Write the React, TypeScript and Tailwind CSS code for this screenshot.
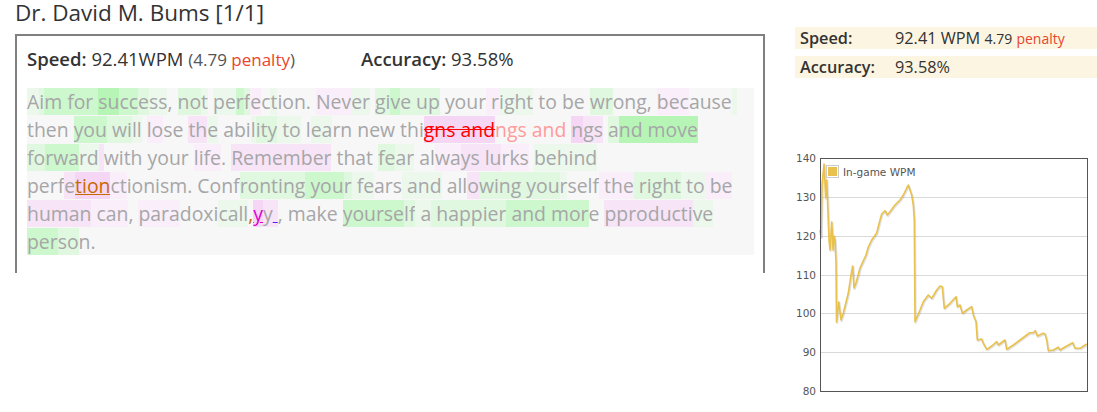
import React from "react";

type Seg = [string, string?];

const G3 = "bg-[#b6f5b6]";
const G2 = "bg-[#cdf7cd]";
const G1 = "bg-[#dff8df]";
const G0 = "bg-[#ecf8ec]";
const P2 = "bg-[#f5d6f5]";
const P1 = "bg-[#f7e4f7]";
const P0 = "bg-[#f9eef9]";

const ERR_STRIKE = "text-[#ff0000] line-through bg-[#f5d6f5]";
const ERR_GHOST = "text-[#ff9a9a]";
const ERR_ORANGE = "text-[#c86a00] underline bg-[#f5d6f5]";
const ERR_ORANGE2 = "text-[#c86a00] underline";
const ERR_MAG = "text-[#e000d0] underline bg-[#f5d6f5]";
const ERR_BLUE = "underline decoration-[#5a1aff] bg-[#f7e4f7]";

const lines: Seg[][] = [
  [
    ["A", G0], ["i", G1], ["m", G2], [" ", G2], ["for", G2], [" ", G2], ["su", G3], ["cc", G2], ["e", G1], ["ss", G0], [", "],
    ["no", G1], ["t", G0], [" "], ["pe", G0], ["r", G2], ["f", G1], ["e", P0], ["c"], ["t", G0], ["ion. "],
    ["Nev", P0], ["er", G0], [" "], ["gi", G1], ["v", G2], ["e", G1], [" up", G1], [" your"], [" r", P0], ["ight", G0],
    [" to be "], ["wr", G1], ["ong, "], ["bec", P0], ["ause"], [" ", G0],
  ],
  [
    ["then "], ["you", G2], [" wi", G1], ["ll", G0], [" "], ["lo", P0], ["se "], ["th", P1], ["e", G0], [" abi"], ["l", G0],
    ["ity", G1], [" to", G0], [" l"], ["ea", G0], ["rn new thi"], ["gns and", ERR_STRIKE], ["ngs and ", ERR_GHOST],
    ["n", P2], ["gs", P1], [" "], ["a", G1], ["nd move", G3],
  ],
  [
    ["fo", G1], ["rwa", G2], ["rd", G0], [" ", P1], ["with your "], ["life", P0], [". "], ["Remember", P1], [" that "],
    ["fe", G1], ["ar", G0], [" al"], ["wa", P0], ["ys ", P1], ["lu", P1], ["rks", P0], [" "], ["behind", G0],
  ],
  [
    ["perf"], ["e", P1], ["tion", ERR_ORANGE], ["ct", P0], ["ionism. "], ["Conf"], ["ronting", G1], [" you", G2], ["r", G1],
    [" ", G0], ["fe", G0], ["ars"], [" and", G0], [" all"], ["o", P1], ["wing", G1], [" you", G1], ["r", G0], ["self"],
    [" the", P0], [" right", G1], [" to", G0], [" be", P0],
  ],
  [
    ["human", P1], [" can", P0], [", "], ["para", P0], ["doxi"], ["call", G0], [",", ERR_ORANGE2], ["y", ERR_MAG], ["y", P1],
    [" ", ERR_BLUE], [", make "], ["yourse", G2], ["lf", G1], [" a", G0], [" happier", G1], [" and", G2], [" mor", G2],
    ["e "], ["pproducti", P1], ["ve", G0],
  ],
  [["per", G2], ["so", G1], ["n."]],
];

const pts: [number, number][] = [
  [820, 230], [821, 237], [822, 185], [824, 164], [825.7, 198], [826.7, 180], [827.5, 200], [829, 240], [830, 250],
  [831.7, 222], [832.5, 236], [833, 250], [834, 236], [835, 240], [836, 262], [836.5, 322], [838.7, 302], [841, 320],
  [843.3, 313], [848.3, 293], [851, 275], [852.7, 266], [854, 288], [856, 283], [860, 268], [866, 255], [868.3, 247],
  [871.7, 240], [876.7, 233], [880, 220], [881.7, 214], [885, 210.7], [887.3, 215], [890, 211.7], [895, 205],
  [900, 200], [903.3, 195], [908.3, 185], [911.7, 195], [913.3, 205], [914.3, 220], [915, 321.7], [920, 310],
  [923.3, 301.7], [928.3, 295], [931.7, 298.3], [936.7, 290], [940, 286], [942.3, 286.7], [943.3, 298.3],
  [944.3, 308.3], [950, 303.3], [956, 296.7], [957.3, 306.7], [960, 305], [962.3, 313.3], [966.7, 310],
  [971.7, 306.7], [973.3, 315], [976, 321.7], [977.3, 340], [981.7, 339], [983.3, 343.3], [986.7, 349.3],
  [991.7, 346], [996.7, 341.7], [998.3, 345], [1005, 340], [1006.7, 349.3], [1013.3, 345], [1020, 340],
  [1026.7, 335], [1030, 332.7], [1033.3, 332.7], [1035.3, 330.7], [1037.3, 336], [1043.3, 333.3], [1045, 334],
  [1046.7, 340], [1048.3, 350.7], [1053.3, 350], [1058.3, 347.3], [1060, 350], [1066.7, 346], [1072.7, 342.7],
  [1075, 348.3], [1080, 348.3], [1086.7, 344],
];

const OX = 795;
const OY = 148;
const d = pts.map((p, i) => (i ? "L" : "M") + (p[0] - OX).toFixed(1) + " " + (p[1] - OY).toFixed(1)).join(" ");

const ticks = [140, 130, 120, 110, 100, 90, 80];
const yOf = (v: number) => 10 + ((140 - v) * 233) / 60;

function Chart() {
  return (
    <svg width={302} height={257} className="block mt-[70px]">
      {ticks.map((t) => {
        const y = Math.round(yOf(t)) + 0.5;
        return (
          <g key={t}>
            {t !== 140 && t !== 80 && <line x1={25} x2={292} y1={y} y2={y} stroke="#d9d9d9" strokeWidth={1} />}
            <text x={21} y={y + 3.5} textAnchor="end" fontSize={10.5} fill="#555" fontFamily="'DejaVu Sans', sans-serif">
              {t}
            </text>
          </g>
        );
      })}
      <path d={d} fill="none" stroke="rgba(0,0,0,0.12)" strokeWidth={2} transform="translate(0.8,1)" strokeLinejoin="round" />
      <path d={d} fill="none" stroke="#e9c14d" strokeWidth={1.6} strokeLinejoin="round" />
      <rect x={25.5} y={10.5} width={267} height={233} fill="none" stroke="#555" strokeWidth={1} />
      <rect x={31.5} y={17.5} width={12} height={12} fill="#fff" stroke="#ccc" strokeWidth={1} />
      <rect x={33} y={19} width={9} height={9} fill="#e9c14d" />
      <text x={48} y={27.5} fontSize={10.5} fill="#555" fontFamily="'DejaVu Sans', sans-serif">
        In-game WPM
      </text>
    </svg>
  );
}

export default function App() {
  return (
    <div className="flex w-[1097px] h-[412px] bg-white overflow-hidden font-['Open_Sans',sans-serif] text-[#333]">
      <div className="w-[795px] shrink-0 pl-[15px]">
        <div className="text-[22.5px] leading-[26px]">Dr. David M. Bums [1/1]</div>
        <div className="mt-[8px] w-[750px] h-[239px] border-2 border-b-0 border-[#808080] pl-[10px] pr-[9px]">
          <div className="pt-[10px] h-[52px] flex items-baseline text-[18.5px] leading-[26px]">
            <div className="w-[334px] shrink-0">
              <span className="font-semibold">Speed:</span> 92.41WPM{" "}
              <span className="text-[17px] text-[#555]">
                (4.79 <span className="text-[#e8452c]">penalty</span>)
              </span>
            </div>
            <div>
              <span className="font-semibold">Accuracy:</span> 93.58%
            </div>
          </div>
          <div className="bg-[#f7f7f7] text-[19.4px] leading-[28px] text-[#a6a6a8] h-[167px]">
            {lines.map((line, i) => (
              <div key={i} className="whitespace-pre">
                {line.map((s, j) => (
                  <span key={j} className={s[1] || ""}>
                    {s[0]}
                  </span>
                ))}
              </div>
            ))}
          </div>
        </div>
      </div>
      <div className="flex-1 pt-[27px] text-[16.3px]">
        <div className="h-[22px] bg-[#fcf5e1] flex items-center pl-[5px]">
          <span className="w-[95px] font-semibold">Speed:</span>
          <span>
            92.41 WPM <span className="text-[14px]">4.79</span>{" "}
            <span className="text-[14px] text-[#e8452c]">penalty</span>
          </span>
        </div>
        <div className="mt-[7px] h-[22px] bg-[#fcf5e1] flex items-center pl-[5px]">
          <span className="w-[95px] font-semibold">Accuracy:</span>
          <span>93.58%</span>
        </div>
        <Chart />
      </div>
    </div>
  );
}
